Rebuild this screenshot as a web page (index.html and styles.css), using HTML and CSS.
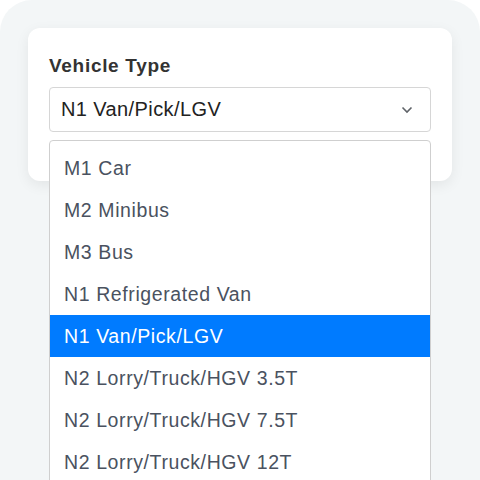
FILE: index.html
```html
<!DOCTYPE html>
<html lang="en">
	<head>
		<meta charset="UTF-8">
		<meta name="viewport" content="width=device-width, initial-scale=1.0">
		<title>Vehicle Type</title>
		<link rel="stylesheet" href="styles.css">
	</head>
	<body>
		<div class="panel">
			<div class="card">
				<div class="label">Vehicle Type</div>
				<div class="select">
					<span class="select-value">N1 Van/Pick/LGV</span>
					<svg class="chevron" width="12" height="8" viewBox="0 0 12 8">
						<path d="M1.5 1.5 L6 6 L10.5 1.5" fill="none" stroke="#5f6368" stroke-width="1.6"/>
					</svg>
				</div>
				<ul class="options">
					<li>M1 Car</li>
					<li>M2 Minibus</li>
					<li>M3 Bus</li>
					<li>N1 Refrigerated Van</li>
					<li class="active">N1 Van/Pick/LGV</li>
					<li>N2 Lorry/Truck/HGV 3.5T</li>
					<li>N2 Lorry/Truck/HGV 7.5T</li>
					<li>N2 Lorry/Truck/HGV 12T</li>
				</ul>
			</div>
		</div>
	</body>
</html>
```
FILE: styles.css
```css
* {
	margin: 0;
	padding: 0;
	box-sizing: border-box;
}

body {
	background-color: #fff;
	font-family: "Liberation Sans", Arial, sans-serif;
	width: 480px;
	height: 480px;
	overflow: hidden;
}

.panel {
	background-color: #f3f6f7;
	border-radius: 32px 32px 0 0;
	height: 480px;
	padding: 28px 28px 0;
	overflow: hidden;
}

.card {
	background-color: #fff;
	border-radius: 12px;
	box-shadow: 0 4px 14px rgba(0, 0, 0, 0.07);
	height: 153px;
	padding: 21px 21px 0;
}

.label {
	font-size: 19px;
	font-weight: bold;
	letter-spacing: 0.7px;
	color: #333;
	height: 38px;
	line-height: 34px;
}

.select {
	height: 45px;
	border: 1px solid #d6d6d6;
	border-radius: 4px;
	display: flex;
	align-items: center;
	justify-content: space-between;
	padding: 0 17px 0 11px;
}

.select-value {
	font-size: 20px;
	letter-spacing: 0.4px;
	color: #222;
}

.options {
	list-style: none;
	margin-top: 8px;
	background-color: #fff;
	border: 1px solid #cfcfcf;
	border-radius: 4px;
	padding-top: 6px;
	height: 400px;
	position: relative;
	z-index: 1;
}

.options li {
	height: 42px;
	line-height: 42px;
	padding-left: 14px;
	font-size: 19.5px;
	letter-spacing: 0.6px;
	color: #4a5260;
}

.options li.active {
	background-color: #007bff;
	color: #fff;
}
```
